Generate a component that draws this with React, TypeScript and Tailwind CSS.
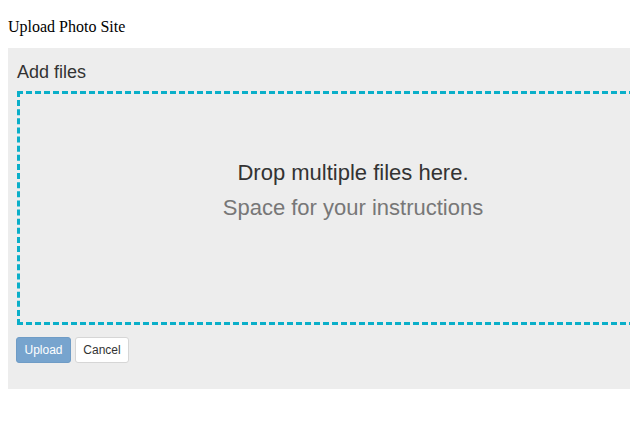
import React from "react";

export default function App() {
  return (
    <div className="w-[630px] h-[429px] overflow-hidden bg-white">
      <div className="pl-[8px] pt-[17px] text-[16px] leading-[19px] text-black" style={{ fontFamily: '"Liberation Serif", "Times New Roman", serif' }}>
        Upload Photo Site
      </div>
      <div
        className="mt-[12px] ml-[8px] w-[700px] bg-[#ededed] pl-[8px] pt-[14px] pb-[26px]"
        style={{ fontFamily: '"Liberation Sans", Arial, sans-serif' }}
      >
        <div className="text-[18px] leading-[21px] text-[#333333] ml-[1px]">Add files</div>
        <div className="mt-[8px] ml-[1px] w-[672px] h-[234px] border-[3px] border-dashed border-[#0aafc9] flex flex-col items-center justify-center pb-[36px]">
          <div className="text-[22px] leading-[35px] text-[#333333]">Drop multiple files here.</div>
          <div className="text-[22px] leading-[35px] text-[#777777]">Space for your instructions</div>
        </div>
        <div className="mt-[12px] flex gap-[4px]">
          <button className="w-[55px] h-[26px] rounded-[3px] bg-[#77a4ce] border border-[#6f9cc6] text-white text-[12px] leading-none">
            Upload
          </button>
          <button className="w-[54px] h-[26px] rounded-[3px] bg-white border border-[#d6d6d6] text-[#333333] text-[12px] leading-none">
            Cancel
          </button>
        </div>
      </div>
    </div>
  );
}
